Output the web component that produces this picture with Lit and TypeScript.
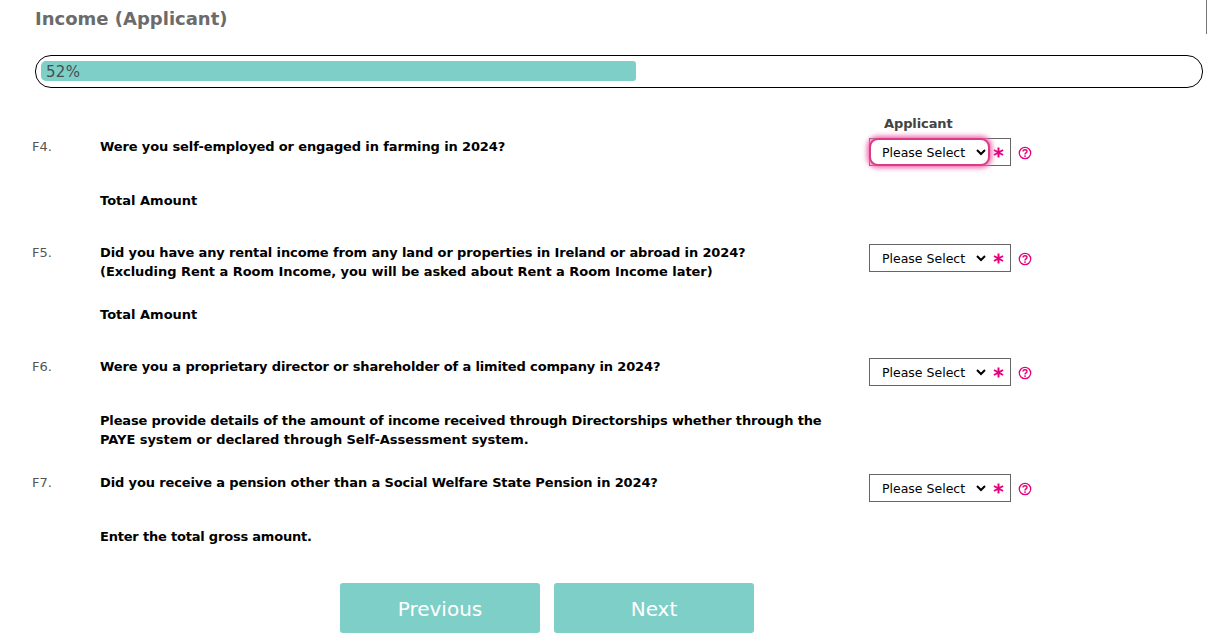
import { LitElement, html, css, svg } from "lit";
import { customElement } from "lit/decorators.js";

const help = svg`<svg class="help" width="14" height="14" viewBox="0 0 14 14" fill="none" stroke="#e6007e"><circle cx="7" cy="7" r="5.7" stroke-width="1.3"/><path d="M5 5.6C5 4.4 5.9 3.7 7 3.7S9 4.4 9 5.4C9 6.8 7 6.9 7 8.4" stroke-width="1.4"/><circle cx="7" cy="10.1" r=".9" fill="#e6007e" stroke="none"/></svg>`;
const star = svg`<svg class="star" width="11" height="11" viewBox="0 0 11 11" stroke="#e6007e" stroke-width="2" stroke-linecap="butt"><path d="M5.5 .5V10.5M1 3L10 8M10 3L1 8"/></svg>`;
const chev = svg`<svg class="chev" width="10" height="7" viewBox="0 0 10 7" fill="none" stroke="#000" stroke-width="2"><path d="M1 1L5 5L9 1"/></svg>`;

@customElement("app-root")
export class AppRoot extends LitElement {
  static styles = css`
    :host { display: block; height: 635px; overflow: hidden; background: #fff; position: relative; font-family: "DejaVu Sans", Verdana, sans-serif; color: #000; }
    .rule { position: absolute; right: 0; top: 0; width: 1px; height: 34px; background: #777; }
    h1 { margin: 0; padding: 9px 0 0 35px; font-size: 18px; line-height: 20px; font-weight: 700; color: #6b6b6b; }
    .bar { box-sizing: border-box; margin: 26px 4px 0 35px; height: 33px; border: 1px solid #000; border-radius: 16px; padding: 5px; }
    .fill { box-sizing: border-box; width: 595px; height: 20px; background: #7fcfc9; border-radius: 5px 3px 3px 5px; font-size: 15px; letter-spacing: .3px; line-height: 22px; padding-left: 5px; color: #44504f; }
    .head { margin: 28px 0 0 884px; font-size: 13px; line-height: 16px; letter-spacing: -.1px; font-weight: 700; color: #444; }
    .row { display: grid; grid-template-columns: 68px 769px 1fr; padding-left: 32px; }
    .num { font-size: 13px; line-height: 19px; color: #555; }
    .q, .sub { font-size: 13px; letter-spacing: -.125px; line-height: 19px; font-weight: 700; margin: 0; }
    .sub { margin-top: 35px; }
    .r5 .sub { margin-top: 24px; }
    .total { letter-spacing: 0; }
    .loose { letter-spacing: -.05px; }
    .tight { letter-spacing: -.2px; }
    .tighter { letter-spacing: -.17px; }
    .r6 .q { letter-spacing: -.14px; }
    .ctl { display: flex; align-items: center; margin-top: 1px; height: 28px; }
    .box { box-sizing: border-box; width: 142px; height: 28px; border: 1px solid #666; display: flex; align-items: center; }
    .sel { position: relative; display: flex; flex: none; }
    select { box-sizing: border-box; appearance: none; width: 120px; height: 26px; border: 0; background: #fff; font-family: inherit; font-size: 12.5px; color: #000; padding: 0 0 0 12px; border-radius: 0; outline: none; }
    .chev { position: absolute; right: 4px; top: 10px; pointer-events: none; }
    .sel.focus { margin-left: -1px; }
    .sel.focus select { height: 28px; width: 121px; border: 2px solid #dc3a86; border-radius: 9px; padding-left: 11px; box-shadow: 0 0 5px 2px #f06ab0; }
    .sel.focus .chev { top: 11px; right: 4px; }
    .star { margin-left: 3px; flex: none; }
    .help { margin-left: 7px; flex: none; position: relative; top: .5px; }
    .r4 { margin-top: 5px; height: 106px; }
    .r5 { height: 114px; }
    .r6 { height: 116px; }
    .r7 { height: 88px; }
    .actions { display: flex; gap: 14px; padding: 0 0 0 340px; margin-top: 22px; }
    button { width: 200px; height: 50px; border: 0; border-radius: 3px; background: #7fcfc9; color: #fff; font-family: inherit; font-size: 20px; padding: 2px 0 0; font-weight: 500; }
  `;

  private ctl(focus = false) {
    return html`<div class="ctl"><div class="box"><div class="sel ${focus ? "focus" : ""}"><select><option>Please Select</option></select>${chev}</div>${star}</div>${help}</div>`;
  }

  render() {
    return html`
      <div class="rule"></div>
      <h1>Income (Applicant)</h1>
      <div class="bar"><div class="fill">52%</div></div>
      <div class="head">Applicant</div>
      <div class="row r4"><div class="num">F4.</div><div><p class="q">Were you self-employed or engaged in farming in 2024?</p><p class="sub total">Total Amount</p></div>${this.ctl(true)}</div>
      <div class="row r5"><div class="num">F5.</div><div><p class="q">Did you have any rental income from any land or properties in Ireland or abroad in 2024?<br><span class="loose">(Excluding Rent a Room Income, you will be asked about Rent a Room Income later)</span></p><p class="sub total">Total Amount</p></div>${this.ctl()}</div>
      <div class="row r6"><div class="num">F6.</div><div><p class="q">Were you a proprietary director or shareholder of a limited company in 2024?</p><p class="sub"><span class="tighter">Please provide details of the amount of income received through Directorships whether through the</span><br><span class="loose">PAYE system or declared through Self-Assessment system.</span></p></div>${this.ctl()}</div>
      <div class="row r7"><div class="num">F7.</div><div><p class="q">Did you receive a pension other than a Social Welfare State Pension in 2024?</p><p class="sub tight">Enter the total gross amount.</p></div>${this.ctl()}</div>
      <div class="actions"><button>Previous</button><button>Next</button></div>
    `;
  }
}
